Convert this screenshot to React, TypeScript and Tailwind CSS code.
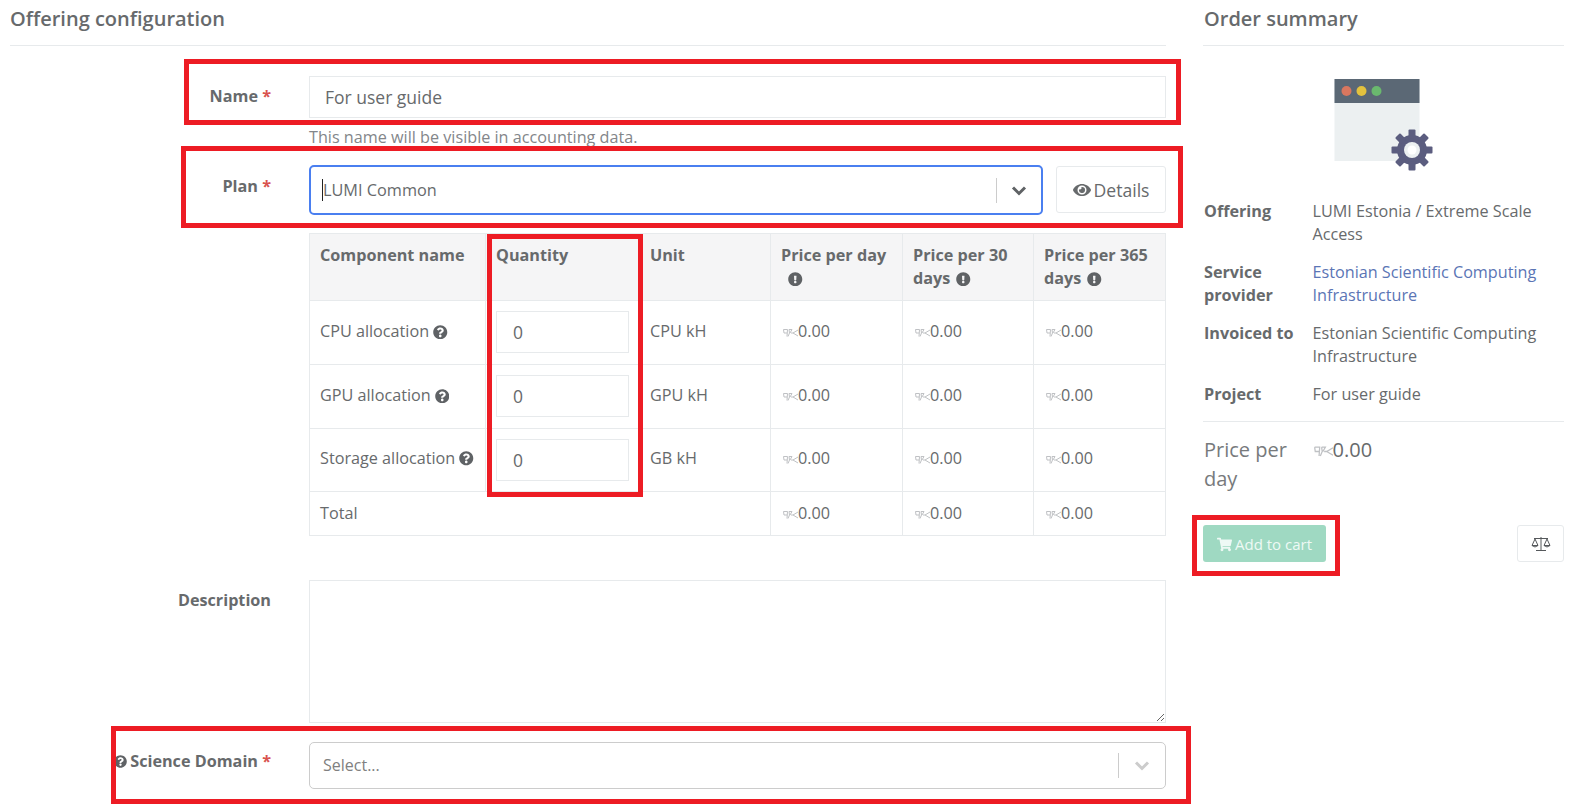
import React from "react";
import { FaEye, FaExclamationCircle, FaQuestionCircle, FaShoppingCart } from "react-icons/fa";

const Chevron = ({ color }: { color: string }) => (
  <svg width="16" height="11" viewBox="0 0 16 11" fill="none">
    <path d="M2 2.5 L8 8.5 L14 2.5" stroke={color} strokeWidth="3" />
  </svg>
);

const Cur = ({ big }: { big?: boolean }) => (
  <svg width={big ? 19 : 15} height={big ? 13 : 10} viewBox="0 0 15 10" fill="none" stroke="#bfc1c4" strokeWidth="1" className={big ? "inline-block align-[-1px] ml-[1px]" : "inline-block align-[-1px] ml-[2px]"}>
    <path d="M0.5 1.5 H4.5 L4 8.5 M0.5 1.5 L1 5 H4 M6 1.5 L6.5 5 L5 8.5 M6 1.5 H9 L7 5" />
    <path d="M8 5 H10 L15 2 M10 5 L15 8" />
  </svg>
);

const Price = () => (
  <span className="whitespace-nowrap"><Cur />0.00</span>
);

const Help = () => <FaQuestionCircle className="inline-block text-[14.5px] text-[#5f6265] align-[-2px]" />;
const Warn = () => <FaExclamationCircle className="inline-block text-[14.5px] text-[#5f6265] align-[-2px] ml-[2px]" />;

const Req = () => <span className="text-[#d9534f]"> *</span>;

const Label = ({ children, pt }: { children: React.ReactNode; pt: string }) => (
  <div className={`w-[261px] shrink-0 mr-[38px] text-right font-bold whitespace-nowrap ${pt}`}>{children}</div>
);

const QtyInput = () => (
  <input readOnly defaultValue="0" className="w-[133px] h-[42px] border border-[#e7eaec] pl-[16px] text-[17.5px] text-[#676a6c] outline-none block" />
);

const rows = [
  { name: "CPU allocation", unit: "CPU kH", h: "h-[64px]", pad: "pb-[2px]", qty: "pb-[2px]" },
  { name: "GPU allocation", unit: "GPU kH", h: "h-[64px]", pad: "pb-[2px]", qty: "pb-[2px]" },
  { name: "Storage allocation", unit: "GB kH", h: "h-[63px]", pad: "pb-[4px]", qty: "pb-[0px]" },
];

const th = "border border-[#e7eaec] align-top font-bold text-left pt-[10px] pl-[10px] pr-[2px] bg-[#f5f5f6]";
const td = "border border-[#e7eaec] pl-[10px] pr-[2px]";

const Summary = ({ label, children, mb }: { label: string; children: React.ReactNode; mb: string }) => (
  <div className={`flex ${mb}`}>
    <div className="w-[108.5px] shrink-0 font-bold">{label}</div>
    <div className="flex-1">{children}</div>
  </div>
);

const Box = ({ className }: { className: string }) => (
  <div className={`absolute border-[5px] border-[#ed1c24] pointer-events-none ${className}`} />
);

export default function App() {
  return (
    <div className="relative w-[1587px] h-[809px] overflow-hidden bg-white text-[#676a6c] text-[16.2px] leading-[23px] font-['Open_Sans',sans-serif]">
      <div className="flex pl-[10px] gap-[37px]">
        <div className="w-[1156px] shrink-0">
          <h2 className="h-[46px] border-b border-[#e7eaec] text-[20px] font-semibold pt-[7px]">Offering configuration</h2>

          <div className="flex mt-[30px]">
            <Label pt="pt-[9px]">Name<Req /></Label>
            <input readOnly defaultValue="For user guide" className="flex-1 min-w-0 h-[42px] border border-[#e7eaec] pl-[15px] text-[17.5px] text-[#676a6c] outline-none" />
          </div>
          <div className="ml-[299px] mt-[8px] text-[#83868a]">This name will be visible in accounting data.</div>

          <div className="flex mt-[16px]">
            <Label pt="pt-[10px]">Plan<Req /></Label>
            <div className="flex-1 flex gap-[13px] items-start min-w-0">
              <div className="flex-1 h-[50px] border-2 border-[#4a7ff0] rounded-[5px] flex items-center pl-[11px] text-[16.3px]">
                <span className="w-px h-[22px] bg-[#222]" />
                <span className="flex-1">LUMI Common</span>
                <span className="w-px h-[25px] bg-[#cccccc]" />
                <span className="mx-[14px] flex"><Chevron color="#5f6265" /></span>
              </div>
              <div className="w-[110px] h-[47px] mt-[1px] pt-[1px] border border-[#e7eaec] rounded-[3px] flex items-center justify-center gap-[3px] text-[17.6px]">
                <FaEye className="text-[18px]" />Details
              </div>
            </div>
          </div>

          <div className="ml-[299px] mt-[18px]">
            <table className="w-[856px] table-fixed border-collapse">
              <colgroup>
                <col className="w-[176px]" />
                <col className="w-[154px]" />
                <col className="w-[131px]" />
                <col className="w-[132px]" />
                <col className="w-[131px]" />
                <col className="w-[132px]" />
              </colgroup>
              <thead>
                <tr className="h-[67px]">
                  <th className={th}>Component name</th>
                  <th className={th}>Quantity</th>
                  <th className={th}>Unit</th>
                  <th className={th}>Price per day <span className="inline-block ml-[5px]"><Warn /></span></th>
                  <th className={th}>Price per 30 days <Warn /></th>
                  <th className={th}>Price per 365 days <Warn /></th>
                </tr>
              </thead>
              <tbody>
                {rows.map((r) => (
                  <tr key={r.name} className={r.h}>
                    <td className={`${td} ${r.pad} whitespace-nowrap`}>{r.name} <Help /></td>
                    <td className={`border border-[#e7eaec] pl-[10px] ${r.qty}`}><QtyInput /></td>
                    <td className={`${td} ${r.pad}`}>{r.unit}</td>
                    <td className={`${td} ${r.pad}`}><Price /></td>
                    <td className={`${td} ${r.pad}`}><Price /></td>
                    <td className={`${td} ${r.pad}`}><Price /></td>
                  </tr>
                ))}
                <tr className="h-[44px]">
                  <td colSpan={3} className={td}>Total</td>
                  <td className={td}><Price /></td>
                  <td className={td}><Price /></td>
                  <td className={td}><Price /></td>
                </tr>
              </tbody>
            </table>
          </div>

          <div className="flex mt-[44px]">
            <Label pt="pt-[9px]">Description</Label>
            <textarea readOnly className="flex-1 min-w-0 h-[143px] border border-[#e7eaec] outline-none block" />
          </div>

          <div className="flex mt-[19px]">
            <Label pt="pt-[8px]"><FaQuestionCircle className="inline-block text-[13px] text-[#5f6265] mr-[3px] align-[-1px]" />Science Domain<Req /></Label>
            <div className="flex-1 h-[47px] border border-[#cccccc] rounded-[5px] flex items-center pl-[13px] text-[#808080] text-[16px]">
              <span className="flex-1">Select...</span>
              <span className="w-px h-[25px] bg-[#cccccc]" />
              <span className="mx-[15px] flex"><Chevron color="#cccccc" /></span>
            </div>
          </div>
        </div>

        <div className="w-[361px] shrink-0">
          <h2 className="h-[46px] border-b border-[#e7eaec] text-[20px] font-semibold pt-[7px] pl-[1px]">Order summary</h2>
          <div className="flex justify-center mt-[33px] h-[92px] mb-[29px]">
            <svg width="100" height="92" viewBox="0 0 100 92">
              <rect x="0.5" y="0" width="85" height="82" fill="#ecf0f1" />
              <rect x="0.5" y="0" width="85" height="24" fill="#5b6875" />
              <circle cx="12.5" cy="12" r="5" fill="#d9775f" />
              <circle cx="27.5" cy="12" r="5" fill="#e3c23e" />
              <circle cx="42.5" cy="12" r="5" fill="#6ab96e" />
              <g transform="translate(78 71)" fill="#5b5d7f">
                <circle r="15" />
                {[0, 45, 90, 135, 180, 225, 270, 315].map((a) => (
                  <rect key={a} x="-3.5" y="-20.5" width="7" height="9" rx="1" transform={`rotate(${a})`} />
                ))}
                <circle r="8" fill="#ecf0f1" />
                <circle r="4.5" fill="#ffffff" />
              </g>
            </svg>
          </div>
          <div className="pl-[1px]">
            <Summary label="Offering" mb="mb-[15px]">LUMI Estonia / Extreme Scale Access</Summary>
            <Summary label="Service provider" mb="mb-[15px]"><span className="text-[#5b75b5]">Estonian Scientific Computing Infrastructure</span></Summary>
            <Summary label="Invoiced to" mb="mb-[15px]">Estonian Scientific Computing Infrastructure</Summary>
            <Summary label="Project" mb="mb-[15px]">For user guide</Summary>
          </div>
          <div className="border-t border-[#e7eaec] flex pl-[1px] pt-[14px] text-[20px] leading-[28.5px]">
            <div className="w-[108.5px] shrink-0 text-[#777a7c]">Price per day</div>
            <div className="whitespace-nowrap"><Cur big />0.00</div>
          </div>
          <div className="flex justify-between items-center mt-[32px]">
            <div className="w-[123px] h-[37px] pt-[1px] rounded-[3px] bg-[#9fd9c2] text-[#eef9f5] flex items-center justify-center gap-[3px] text-[15px]">
              <FaShoppingCart className="text-[15px]" />Add to cart
            </div>
            <div className="w-[47px] h-[37px] pt-[1px] border border-[#e7eaec] rounded-[3px] flex items-center justify-center">
              <svg width="20" height="16" viewBox="0 0 20 16" fill="none" stroke="#55585b" strokeWidth="1">
                <path d="M10 1 V14 M5 14.5 H15 M3 2.5 H17" />
                <path d="M4 3 L1 9.5 H7 Z M16 3 L13 9.5 H19 Z" />
                <path d="M1 9.5 Q4 12.5 7 9.5 M13 9.5 Q16 12.5 19 9.5" />
              </svg>
            </div>
          </div>
        </div>
      </div>

      <Box className="left-[184px] top-[59px] w-[997px] h-[66px]" />
      <Box className="left-[181px] top-[146px] w-[1002px] h-[82px]" />
      <Box className="left-[487px] top-[234px] w-[156px] h-[263px]" />
      <Box className="left-[111px] top-[726px] w-[1080px] h-[78px]" />
      <Box className="left-[1192px] top-[515px] w-[148px] h-[61px]" />
    </div>
  );
}
